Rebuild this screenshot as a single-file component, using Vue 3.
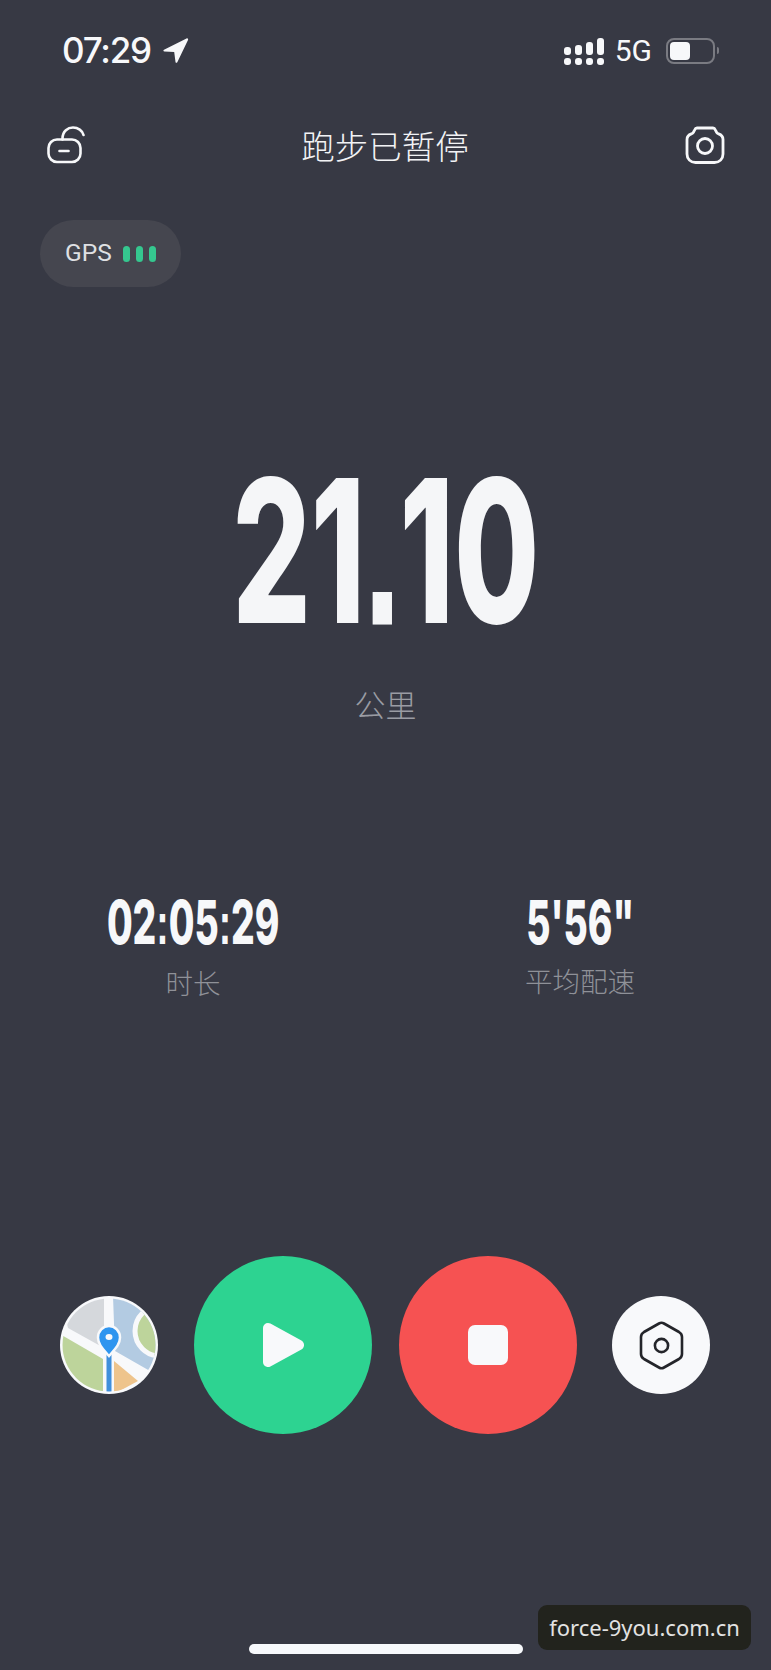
<template>
  <div class="screen">
    <header class="status">
      <div class="status-left">
        <span class="clock">07:29</span>
        <svg class="nav-arrow" viewBox="0 0 27 27"><path d="M24.500 1.500 2 12.800c-1 .6-.7 1.700.4 1.800l9.800.4 1.300 9.900c.2 1.100 1.300 1.200 1.800.3L26 3c.5-1.100-.4-2-1.500-1.500Z" fill="#f7f8fa"/></svg>
      </div>
      <div class="status-right">
        <div class="signal">
          <div v-for="h in signalHeights" :key="h" class="signal-col">
            <i :style="{ height: h + 'px' }"></i>
            <i class="dot"></i>
          </div>
        </div>
        <span class="net">5G</span>
        <div class="battery"><i></i></div>
        <span class="nub"></span>
      </div>
    </header>

    <nav class="topbar">
      <svg class="lock" viewBox="0 0 38 38" fill="none" stroke="#f7f8fa" stroke-width="2.600" stroke-linecap="round">
        <rect x="1.500" y="13.500" width="32" height="22.500" rx="8.500"/>
        <path d="M15.500 13.500V12.500C15.500 5 21 1.500 26 1.500C31 1.500 35.500 4.500 36.500 9"/>
        <path d="M12.500 25h9"/>
      </svg>
      <h1 class="title">跑步已暂停</h1>
      <svg class="camera" viewBox="0 0 40 38" fill="none" stroke="#f7f8fa" stroke-width="2.800" stroke-linejoin="round">
        <path d="M12 2h16c1.500 0 2 1 2.600 2.300l1 2c.4.800 1 1.200 2 1.500 2.400.8 4.400 2.600 4.400 5.700v14.500c0 5-3.500 8.500-8.500 8.500h-19C5.500 36.500 2 33 2 28V13.500c0-3.100 2-4.900 4.400-5.700 1-.3 1.600-.7 2-1.500l1-2C10 3 10.500 2 12 2Z"/>
        <circle cx="20" cy="20" r="7.500"/>
      </svg>
    </nav>

    <div class="gps">
      <span class="gps-label">GPS</span>
      <i class="gps-bar"></i><i class="gps-bar"></i><i class="gps-bar"></i>
    </div>

    <section class="distance">
      <div class="big">21<span class="point">.</span>10</div>
      <div class="unit">公里</div>
    </section>

    <section class="stats">
      <div class="stat">
        <div class="stat-value time">02<span class="colon">:</span>05<span class="colon">:</span>29</div>
        <div class="stat-label">时长</div>
      </div>
      <div class="stat">
        <div class="stat-value pace">5'56"</div>
        <div class="stat-label">平均配速</div>
      </div>
    </section>

    <section class="controls">
      <svg class="small-btn" viewBox="0 0 98 98">
        <defs><clipPath id="mapclip"><circle cx="49" cy="49" r="46.500"/></clipPath></defs>
        <circle cx="49" cy="49" r="49" fill="#f8f9fb"/>
        <g clip-path="url(#mapclip)">
          <rect width="98" height="98" fill="#f8f9fb"/>
          <path d="M0 0H44V52L8 32Z" fill="#d5d8dc"/>
          <path d="M53 0H98V84L90 75L55 55Z" fill="#b3cbe2"/>
          <path d="M0 38L43 63V98H0Z" fill="#bdd49b"/>
          <path d="M54 65L78 85L54 98Z" fill="#eec48c"/>
          <circle cx="100" cy="35" r="25" fill="#bdd49b" stroke="#f8f9fb" stroke-width="5"/>
          <rect x="44" y="50" width="10" height="48" fill="#f8f9fb"/>
          <rect x="46.500" y="55" width="5" height="43" fill="#3f8fdc"/>
        </g>
        <path d="M49 60C44 54 38 49 38 41.500C38 35 43 30 49 30C55 30 60 35 60 41.500C60 49 54 54 49 60Z" fill="#2f95ef" stroke="#f8f9fb" stroke-width="2.500"/>
        <ellipse cx="49" cy="41" rx="3.500" ry="3" fill="#f8f9fb"/>
      </svg>
      <button class="big-btn play">
        <svg class="play-icon" viewBox="0 0 42 46"><path d="M6 6 37 23 6 40Z" fill="#f8f9fb" stroke="#f8f9fb" stroke-width="10" stroke-linejoin="round"/></svg>
      </button>
      <button class="big-btn stop"><i class="stop-icon"></i></button>
      <div class="small-btn settings">
        <svg class="hex" viewBox="0 0 47 51" fill="none" stroke="#24252a" stroke-width="2.600" stroke-linejoin="round">
          <path d="M21 3.500 6 12c-2 1.200-3 2.500-3 5v17c0 2.500 1 3.800 3 5l15 8.500c1.600.9 3.400.9 5 0L41 39c2-1.200 3-2.500 3-5V17c0-2.500-1-3.800-3-5L26 3.500c-1.600-.9-3.400-.9-5 0Z"/>
          <circle cx="23.500" cy="25.500" r="6.600"/>
        </svg>
      </div>
    </section>

    <div class="home"></div>
    <div class="watermark">force-9you.com.cn</div>
  </div>
</template>

<script setup>
const signalHeights = [8, 10, 13, 17]
</script>

<style>
html, body { margin: 0; background: #373944; }
</style>

<style scoped>
.screen {
  position: relative;
  width: 771px;
  height: 1670px;
  overflow: hidden;
  background: #373944;
  color: #f7f8fa;
  font-family: "Noto Sans CJK SC", Roboto, sans-serif;
  display: flex;
  flex-direction: column;
}
.status {
  height: 37px;
  margin-top: 32px;
  padding: 0 52px 0 62px;
  display: flex;
  justify-content: space-between;
  align-items: center;
}
.status-left { display: flex; align-items: center; gap: 11px; }
.clock { font: 500 35px/37px Inter, sans-serif; letter-spacing: -1.200px; }
.nav-arrow { width: 27px; height: 27px; }
.status-right { display: flex; align-items: center; }
.signal { display: flex; gap: 4px; align-items: flex-end; height: 28px; }
.signal-col { display: flex; flex-direction: column; gap: 3px; align-items: center; }
.signal-col i { width: 7px; background: #f7f8fa; border-radius: 3px; display: block; }
.signal-col i.dot { height: 7px; }
.net { font: 400 30px/37px Roboto, sans-serif; margin-left: 11px; }
.battery {
  margin-left: 14px;
  width: 49px;
  height: 26px;
  box-sizing: border-box;
  border: 2px solid #7a7b82;
  border-radius: 8px;
  padding: 2px;
}
.battery i { display: block; width: 20px; height: 18px; border-radius: 4px; background: #f7f8fa; }
.nub { width: 2px; height: 7px; margin-left: 2px; background: #7a7b82; border-radius: 0 2px 2px 0; }
.topbar {
  height: 40px;
  margin-top: 56px;
  padding: 0 46px 0 47px;
  display: flex;
  justify-content: space-between;
  align-items: center;
}
.lock { width: 38px; height: 38px; }
.camera { width: 40px; height: 38px; }
.title { margin: 0; font-size: 33.500px; line-height: 40px; font-weight: 300; color: #f2f3f5; }
.gps {
  margin: 55px 0 0 40px;
  width: 141px;
  height: 67px;
  box-sizing: border-box;
  padding-left: 25px;
  border-radius: 34px;
  background: #45464f;
  display: flex;
  align-items: center;
  gap: 6px;
}
.gps-label { font: 400 24.500px/1 Roboto, sans-serif; color: #dfe0e3; margin-right: 5px; }
.gps-bar { width: 7px; height: 16px; border-radius: 4px; background: #35c78f; }
.distance { margin-top: 161px; display: flex; flex-direction: column; align-items: center; }
.big, .stat-value { font-family: Inter, sans-serif; font-weight: 800; white-space: nowrap; }
.big {
  font-size: 199px;
  line-height: 206px;
  color: #f5f6f8;
  transform: scaleX(0.62);
}
.point, .colon { font-family: "Liberation Sans", sans-serif; font-weight: 700; }
.point { -webkit-text-stroke: 3px #f5f6f8; }
.unit { margin-top: 27px; font-size: 31px; line-height: 40px; font-weight: 300; color: #9a9ca3; }
.stats { margin-top: 164px; display: flex; }
.stat { position: relative; display: flex; flex-direction: column; align-items: center; width: 362px; }
.stat:first-child { margin-left: 12px; }
.stat:last-child { margin-left: 25px; }
.stat-value { font-size: 60px; line-height: 68px; transform: scaleX(0.62); color: #f7f8fa; }
.stat-label { margin-top: 7px; font-size: 27.500px; line-height: 34px; font-weight: 300; color: #8f9198; }
.controls {
  margin-top: 257px;
  height: 178px;
  padding-left: 60px;
  display: flex;
  align-items: center;
}
.small-btn { width: 98px; height: 98px; flex: none; }
.big-btn {
  width: 178px;
  height: 178px;
  flex: none;
  padding: 0;
  border: 0;
  border-radius: 50%;
  display: flex;
  align-items: center;
  justify-content: center;
}
.play { margin-left: 36px; background: #2dd391; }
.play-icon { width: 42px; height: 46px; }
.stop { margin-left: 27px; background: #f65252; }
.stop-icon { display: block; width: 40px; height: 40px; border-radius: 7px; background: #f8f9fb; }
.settings {
  margin-left: 35px;
  border-radius: 50%;
  background: #f8f9fb;
  display: flex;
  align-items: center;
  justify-content: center;
}
.hex { width: 47px; height: 51px; }
.home {
  position: absolute;
  left: 249px;
  top: 1644px;
  width: 274px;
  height: 10px;
  border-radius: 5px;
  background: #f7f9fc;
}
.watermark {
  position: absolute;
  left: 538px;
  top: 1605px;
  width: 213px;
  height: 45px;
  border-radius: 9px;
  background: #22231d;
  color: #e2e2e2;
  font: 400 22px/45px "Noto Sans", sans-serif;
  text-align: center;
}
</style>
